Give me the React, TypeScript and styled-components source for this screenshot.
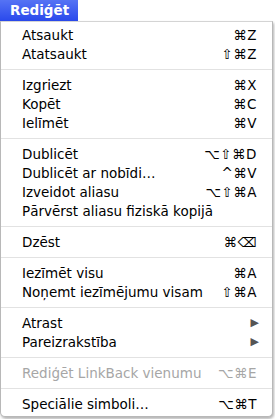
import React from "react";
import styled, { createGlobalStyle } from "styled-components";

const Global = createGlobalStyle`
  html, body { margin: 0; padding: 0; background: #ffffff; }
  body { font-family: "DejaVu Sans", "Liberation Sans", sans-serif; }
`;

const Wrap = styled.div`
  width: 275px;
  height: 419px;
  display: flex;
  flex-direction: column;
`;

const MenuBar = styled.div`
  height: 21px;
  display: flex;
`;

const Tab = styled.div`
  background: linear-gradient(#5573f4, #2a49ec);
  color: #ffffff;
  font-weight: bold;
  font-size: 13.5px;
  line-height: 21px;
  padding: 0 9px 0 10px;
`;

const Panel = styled.div`
  width: 271px;
  border: 1px solid #b8b8b8;
  border-top-color: #d4d4d4;
  border-radius: 0 0 5px 5px;
  background: #ffffff;
  box-shadow: 1px 2px 3px rgba(0, 0, 0, 0.3);
  padding: 3px 0 3px;
  display: flex;
  flex-direction: column;
`;

const Item = styled.div<{ $disabled?: boolean }>`
  height: 19px;
  display: flex;
  align-items: center;
  justify-content: space-between;
  padding: 0 15px 0 21px;
  font-size: 13.5px;
  color: ${(p) => (p.$disabled ? "#a6a6a6" : "#000000")};
`;

const Label = styled.span`
  white-space: nowrap;
`;

const Shortcut = styled.span`
  white-space: nowrap;
  letter-spacing: 0.5px;
`;

const Arrow = styled.span`
  font-size: 11px;
  color: #555555;
  margin-right: -2px;
`;

const Sep = styled.div`
  height: 12px;
  display: flex;
  align-items: center;
  &::after {
    content: "";
    flex: 1;
    height: 1px;
    background: #e2e2e2;
  }
`;

type Row =
  | { t: "sep" }
  | { t: "item"; label: string; sc?: string; sub?: boolean; disabled?: boolean };

const rows: Row[] = [
  { t: "item", label: "Atsaukt", sc: "⌘Z" },
  { t: "item", label: "Atatsaukt", sc: "⇧⌘Z" },
  { t: "sep" },
  { t: "item", label: "Izgriezt", sc: "⌘X" },
  { t: "item", label: "Kopēt", sc: "⌘C" },
  { t: "item", label: "Ielīmēt", sc: "⌘V" },
  { t: "sep" },
  { t: "item", label: "Dublicēt", sc: "⌥⇧⌘D" },
  { t: "item", label: "Dublicēt ar nobīdi…", sc: "^⌘V" },
  { t: "item", label: "Izveidot aliasu", sc: "⌥⇧⌘A" },
  { t: "item", label: "Pārvērst aliasu fiziskā kopijā" },
  { t: "sep" },
  { t: "item", label: "Dzēst", sc: "⌘⌫" },
  { t: "sep" },
  { t: "item", label: "Iezīmēt visu", sc: "⌘A" },
  { t: "item", label: "Noņemt iezīmējumu visam", sc: "⇧⌘A" },
  { t: "sep" },
  { t: "item", label: "Atrast", sub: true },
  { t: "item", label: "Pareizrakstība", sub: true },
  { t: "sep" },
  { t: "item", label: "Rediģēt LinkBack vienumu", sc: "⌥⌘E", disabled: true },
  { t: "sep" },
  { t: "item", label: "Speciālie simboli…", sc: "⌥⌘T" },
];

export default function App() {
  return (
    <>
      <Global />
      <Wrap>
        <MenuBar>
          <Tab>Rediģēt</Tab>
        </MenuBar>
        <Panel>
          {rows.map((r, i) =>
            r.t === "sep" ? (
              <Sep key={i} />
            ) : (
              <Item key={i} $disabled={r.disabled}>
                <Label>{r.label}</Label>
                {r.sc && <Shortcut>{r.sc}</Shortcut>}
                {r.sub && <Arrow>▶</Arrow>}
              </Item>
            )
          )}
        </Panel>
      </Wrap>
    </>
  );
}
